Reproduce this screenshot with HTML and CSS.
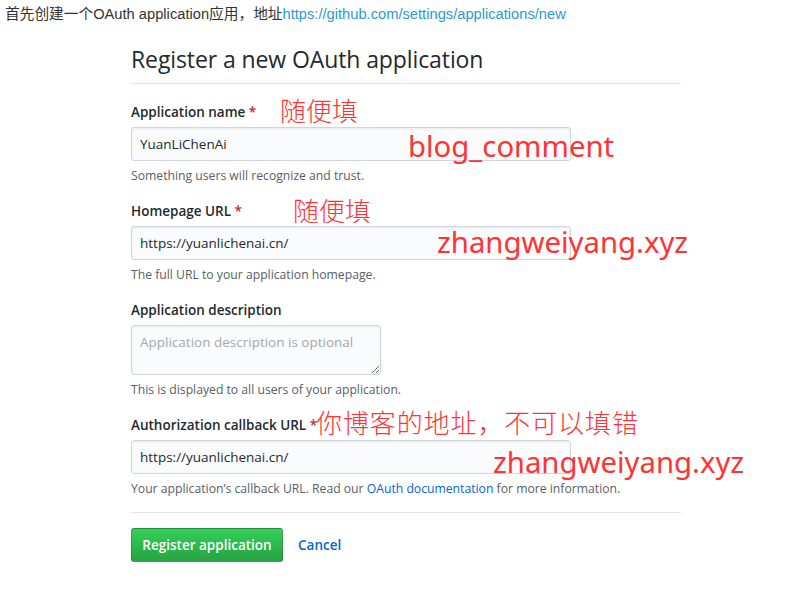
FILE: index.html
```html
<!DOCTYPE html>
<html lang="zh-CN">
<head>
<meta charset="utf-8">
<title>Register a new OAuth application</title>
<link rel="stylesheet" href="styles.css">
</head>
<body>
<div class="page">
  <p class="intro">首先创建一个OAuth application应用，地址<a class="intro-link" href="#">https://github.com/settings/applications/new</a></p>

  <div class="form-wrap">
    <h1 class="title">Register a new OAuth application</h1>

    <div class="group">
      <label class="label">Application name <span class="req">*</span></label>
      <input class="field" type="text" value="YuanLiChenAi">
      <p class="note">Something users will recognize and trust.</p>
    </div>

    <div class="group">
      <label class="label">Homepage URL <span class="req">*</span></label>
      <input class="field" type="text" value="https://yuanlichenai.cn/">
      <p class="note">The full URL to your application homepage.</p>
    </div>

    <div class="group">
      <label class="label">Application description</label>
      <textarea class="area" placeholder="Application description is optional"></textarea>
      <p class="note">This is displayed to all users of your application.</p>
    </div>

    <div class="group">
      <label class="label">Authorization callback URL <span class="req">*</span></label>
      <input class="field" type="text" value="https://yuanlichenai.cn/">
      <p class="note">Your application’s callback URL. Read our <a class="doc-link" href="#">OAuth documentation</a> for more information.</p>
    </div>

    <div class="actions">
      <button class="btn" type="button">Register application</button>
      <a class="cancel" href="#">Cancel</a>
    </div>
  </div>

  <span class="mark mark-cn a1">随便填</span>
  <span class="mark mark-en b1">blog_comment</span>
  <span class="mark mark-cn a2">随便填</span>
  <span class="mark mark-en b2">zhangweiyang.xyz</span>
  <span class="mark mark-cn a3">你博客的地址，不可以填错</span>
  <span class="mark mark-en b3">zhangweiyang.xyz</span>
</div>
</body>
</html>
```

FILE: styles.css
```css
* { box-sizing: border-box; }

html, body {
  margin: 0;
  padding: 0;
  background: #fff;
}

.page {
  position: relative;
  width: 807px;
  min-height: 601px;
  font-family: "Open Sans", "Noto Sans", "Noto Sans CJK SC", sans-serif;
  color: #24292e;
}

.intro {
  margin: 0;
  padding: 5px 0 0 5px;
  height: 19px;
  font-family: "Liberation Sans", "Noto Sans CJK SC", sans-serif;
  font-size: 14.7px;
  line-height: 19px;
  color: #333;
  white-space: nowrap;
}

.intro-link {
  color: #2c9bcf;
  text-decoration: none;
}

.form-wrap {
  margin-left: 131px;
  width: 550px;
}

.title {
  margin: 25px 0 0;
  padding-bottom: 9px;
  border-bottom: 1px solid #e1e4e8;
  font-size: 23px;
  font-weight: 400;
  line-height: 30px;
  letter-spacing: -0.1px;
}

.group {
  margin: 0 0 16px;
}

.title + .group {
  margin-top: 18px;
}

.label {
  display: block;
  margin-bottom: 5px;
  font-size: 13.5px;
  font-weight: 600;
  line-height: 20px;
}

.req {
  color: #cb2431;
}

.field,
.area {
  display: block;
  width: 440px;
  height: 34px;
  padding: 6px 8px;
  border: 1px solid #d1d5da;
  border-radius: 3px;
  background: #fafbfc;
  box-shadow: inset 0 1px 2px rgba(27, 31, 35, 0.075);
  font-family: "Open Sans", "Noto Sans", sans-serif;
  font-size: 13.5px;
  line-height: 20px;
  color: #24292e;
  outline: none;
}

.area {
  width: 250px;
  height: 50px;
  resize: vertical;
}

.area::placeholder {
  color: #a3aab1;
}

.note {
  margin: 6px 0 0;
  font-size: 12.2px;
  line-height: 18px;
  color: #586069;
}

.doc-link {
  color: #0366d6;
  text-decoration: none;
}

.actions {
  display: flex;
  align-items: center;
  gap: 15px;
  margin-top: -2px;
  padding-top: 15px;
  border-top: 1px solid #e1e4e8;
}

.btn {
  width: 152px;
  height: 34px;
  padding: 0;
  border: 1px solid rgba(27, 31, 35, 0.2);
  border-radius: 3px;
  background: linear-gradient(#34d058, #28a745 90%);
  color: #fff;
  font-family: "Open Sans", "Noto Sans", sans-serif;
  font-size: 13.5px;
  font-weight: 600;
  line-height: 20px;
}

.cancel {
  color: #0366d6;
  text-decoration: none;
  font-size: 13.5px;
  font-weight: 600;
}

.mark {
  position: absolute;
  color: #ff3333;
  white-space: nowrap;
}

.mark-cn {
  font-family: "Noto Sans CJK SC", sans-serif;
  font-weight: 300;
  font-size: 26px;
  line-height: 30px;
}

.mark-en {
  font-family: "Noto Sans", "Open Sans", sans-serif;
  font-size: 29.3px;
  line-height: 36px;
}

.a1 { left: 280px; top: 95px; }
.b1 { left: 408px; top: 128px; }
.a2 { left: 293px; top: 195px; }
.b2 { left: 437px; top: 224px; }
.a3 { left: 316px; top: 407px; letter-spacing: 0.9px; }
.b3 { left: 493px; top: 444px; }
```
